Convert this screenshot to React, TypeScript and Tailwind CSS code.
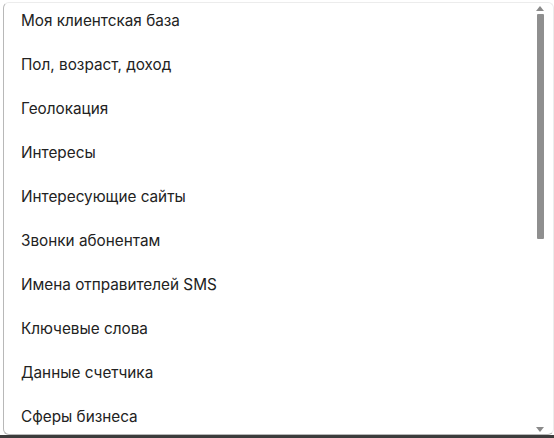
import React from "react";

const items = [
  "Моя клиентская база",
  "Пол, возраст, доход",
  "Геолокация",
  "Интересы",
  "Интересующие сайты",
  "Звонки абонентам",
  "Имена отправителей SMS",
  "Ключевые слова",
  "Данные счетчика",
  "Сферы бизнеса",
];

export default function App() {
  return (
    <div className="w-[554px] h-[438px] bg-white flex flex-col overflow-hidden" style={{ fontFamily: "Inter, 'Noto Sans', sans-serif" }}>
      <div className="ml-[3px] mt-[2px] h-[433px] border border-[#b8b8b8] border-t-[#ececec] border-r-[#ececec] rounded-[6px] flex flex-row overflow-hidden">
        <div className="flex-1 overflow-hidden">
          <div className="-mt-[4px] flex flex-col">
            {items.map((t) => (
              <div key={t} className="h-[44px] flex items-center pl-[17px] text-[15.3px] text-[#222222]">
                {t}
              </div>
            ))}
          </div>
        </div>
        <div className="w-[12px] mr-[7px] flex flex-col items-center">
          <div className="mt-[3px] w-0 h-0 border-l-[4px] border-r-[4px] border-b-[5px] border-l-transparent border-r-transparent border-b-[#8a8a8a]" />
          <div className="mt-[3px] w-[7px] h-[225px] bg-[#8f8f8f] rounded-[1px]" />
          <div className="flex-1" />
          <div className="mb-[2px] w-0 h-0 border-l-[4px] border-r-[4px] border-t-[5px] border-l-transparent border-r-transparent border-t-[#8a8a8a]" />
        </div>
      </div>
      <div className="flex-1 bg-[#3c3c3c]" />
    </div>
  );
}
